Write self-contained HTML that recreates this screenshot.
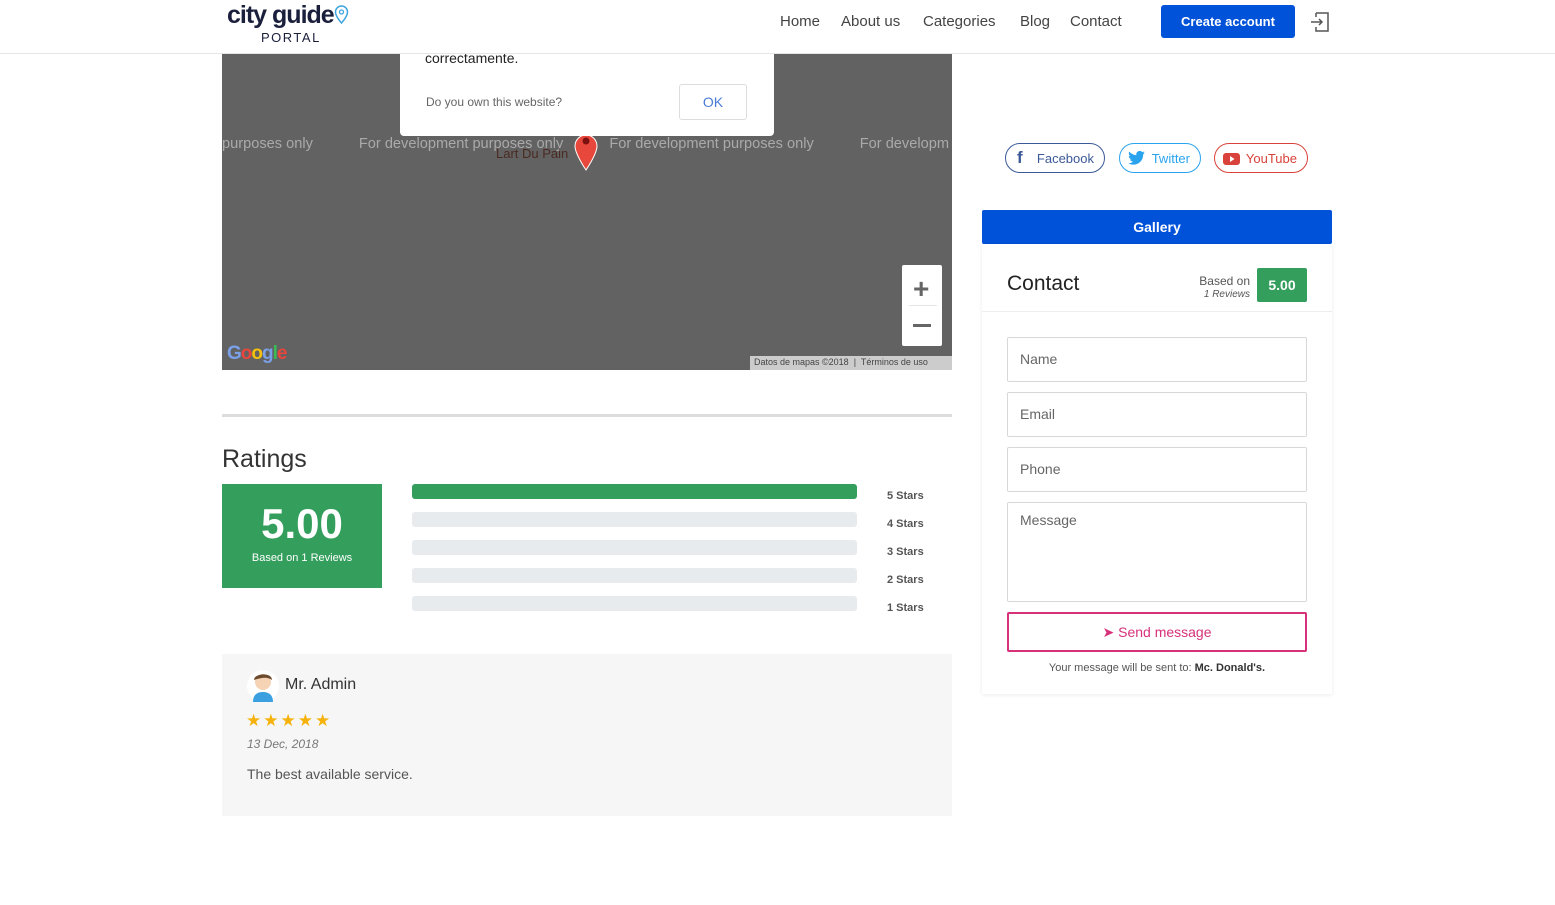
<!DOCTYPE html>
<html><head><meta charset="utf-8"><style>
*{box-sizing:border-box;margin:0;padding:0}
body{width:1555px;height:905px;background:#fff;font-family:"Liberation Sans",sans-serif;color:#333;position:relative;overflow:hidden}
.a{position:absolute}
.nav a{position:absolute;top:13px;font-size:15px;color:#444;text-decoration:none}
.inp{position:absolute;left:1007px;width:300px;border:1px solid #d8d8d8;border-radius:2px;font-size:14px;color:#666;padding:13px 12px}
.bar{position:absolute;left:412px;width:445px;height:15px;background:#e8ebee;border-radius:3px}
.lbl{position:absolute;left:887px;font-size:11px;color:#555;font-weight:bold}
.soc{position:absolute;top:143px;height:30px;border-radius:15px;border:1px solid;font-size:13px;padding:7px 10px 0 0;text-align:right}
</style></head><body>
<div class="a" style="left:0;top:53px;width:1555px;height:1px;background:#e5e5e5"></div>
<div class="a" style="left:227px;top:1px;font-size:25px;font-weight:bold;color:#1a1f3c;letter-spacing:-1px">city guide</div>
<svg class="a" style="left:334px;top:5px" width="15" height="20" viewBox="0 0 15 20"><path d="M7.5 1a6 6 0 0 1 6 6c0 4.5-6 11-6 11S1.5 11.5 1.5 7a6 6 0 0 1 6-6z" fill="none" stroke="#3da4de" stroke-width="1.5"/><circle cx="7.5" cy="7" r="2" fill="none" stroke="#3da4de" stroke-width="1.3"/></svg>
<div class="a" style="left:261px;top:30px;font-size:13px;letter-spacing:1.5px;color:#1a1f3c">PORTAL</div>
<div class="nav"><a style="left:780px">Home</a><a style="left:841px">About us</a><a style="left:923px">Categories</a><a style="left:1020px">Blog</a><a style="left:1070px">Contact</a></div>
<div class="a" style="left:1161px;top:5px;width:134px;height:33px;background:#0052d9;border-radius:3px;color:#fff;font-weight:bold;font-size:13px;text-align:center;line-height:33px">Create account</div>
<svg class="a" style="left:1309px;top:10px" width="24" height="24" viewBox="0 0 24 24" fill="none" stroke="#555" stroke-width="1.5"><path d="M7 3h12v18H7v-4M7 7V3M2 12h11M10 9l3 3-3 3"/></svg>

<div class="a" style="left:222px;top:54px;width:730px;height:316px;background:#626262;overflow:hidden">
<div class="a" style="left:0;top:82px;font-size:14.6px;color:#aaa;white-space:nowrap">purposes only<span style="margin-left:46px">For development purposes only</span><span style="margin-left:46px">For development purposes only</span><span style="margin-left:46px">For developm</span></div>
<div class="a" style="left:274px;top:92px;font-size:13px;color:#4a2a22">Lart Du Pain</div>
<svg class="a" style="left:352px;top:80px" width="24" height="37" viewBox="0 0 24 37"><path d="M12 1a11 11 0 0 1 11 11c0 8-11 24-11 24S1 20 1 12A11 11 0 0 1 12 1z" fill="#e8473b" stroke="#fff"/><circle cx="12" cy="7" r="3.5" fill="#7a1010"/></svg>
<div class="a" style="left:178px;top:0;width:374px;height:82px;background:#fff;border-radius:0 0 4px 4px"></div>
<div class="a" style="left:203px;top:-4px;font-size:14px;color:#222">correctamente.</div>
<div class="a" style="left:204px;top:41px;font-size:12px;color:#666">Do you own this website?</div>
<div class="a" style="left:457px;top:30px;width:68px;height:36px;border:1px solid #ddd;border-radius:3px;color:#4a7bd9;font-size:14px;text-align:center;line-height:34px">OK</div>
<div class="a" style="left:680px;top:211px;width:40px;height:81px;background:#fff;border-radius:2px"></div>
<div class="a" style="left:691px;top:219px;font-size:28px;color:#666;font-weight:bold">+</div>
<div class="a" style="left:687px;top:251px;width:28px;height:1px;background:#e5e5e5"></div>
<div class="a" style="left:691px;top:270px;width:18px;height:3px;background:#666"></div>
<div class="a" style="left:5px;top:289px;font-size:19px;font-weight:bold;color:#7aa0e8;letter-spacing:-1px">G<span style="color:#e8453c">o</span><span style="color:#f4c20d">o</span>g<span style="color:#3cba54">l</span><span style="color:#e8453c">e</span></div>
<div class="a" style="left:528px;top:302px;width:202px;height:14px;background:#ccc;font-size:9px;color:#444;padding:1px 4px;white-space:nowrap">Datos de mapas ©2018 &nbsp;|&nbsp; Términos de uso</div>
</div>

<div class="a" style="left:222px;top:414px;width:730px;height:3px;background:#ddd"></div>
<div class="a" style="left:222px;top:445px;font-size:25px;color:#333">Ratings</div>
<div class="a" style="left:222px;top:484px;width:160px;height:104px;background:#349e5c;color:#fff;text-align:center">
<div style="font-size:42px;font-weight:bold;margin-top:16px;line-height:48px">5.00</div>
<div style="font-size:11px;margin-top:4px">Based on 1 Reviews</div></div>
<div class="bar" style="top:484px;background:#349e5c"></div>
<div class="bar" style="top:512px"></div><div class="bar" style="top:540px"></div><div class="bar" style="top:568px"></div><div class="bar" style="top:596px"></div>
<div class="lbl" style="top:490px">5 Stars</div><div class="lbl" style="top:518px">4 Stars</div><div class="lbl" style="top:546px">3 Stars</div><div class="lbl" style="top:574px">2 Stars</div><div class="lbl" style="top:602px">1 Stars</div>

<div class="a" style="left:222px;top:654px;width:730px;height:162px;background:#f6f6f6"></div>
<svg class="a" style="left:247px;top:668px" width="32" height="36" viewBox="0 0 32 36"><circle cx="16" cy="18" r="16" fill="#fff"/><circle cx="16" cy="14" r="8" fill="#f6d3b5"/><path d="M7 12c0-7 18-8 18 0-4-3-9-3-18 0z" fill="#6b4a2e"/><path d="M6 34c0-7 4-10 10-10s10 3 10 10z" fill="#3aa0e0"/></svg>
<div class="a" style="left:285px;top:676px;font-size:16px;color:#333">Mr. Admin</div>
<div class="a" style="left:246px;top:711px;font-size:17px;color:#f5b20b;letter-spacing:2px">★★★★★</div>
<div class="a" style="left:247px;top:737px;font-size:12px;color:#777;font-style:italic">13 Dec, 2018</div>
<div class="a" style="left:247px;top:766px;font-size:14px;color:#555">The best available service.</div>

<div class="soc" style="left:1005px;width:100px;border-color:#3b5998;color:#3b5998"><span style="position:absolute;left:11px;top:4px;font-weight:bold;font-size:17px">f</span>Facebook</div>
<div class="soc" style="left:1119px;width:82px;border-color:#2aa3ef;color:#2aa3ef"><svg style="position:absolute;left:8px;top:7px" width="17" height="14" viewBox="0 0 24 20"><path d="M24 2.4a10 10 0 0 1-2.8.8A5 5 0 0 0 23.3.4a10 10 0 0 1-3.1 1.2A4.9 4.9 0 0 0 11.8 6 14 14 0 0 1 1.7.9a4.9 4.9 0 0 0 1.5 6.6A4.9 4.9 0 0 1 1 6.9a4.9 4.9 0 0 0 3.900 4.8 5 5 0 0 1-2.2.1 4.9 4.9 0 0 0 4.6 3.4A9.9 9.9 0 0 1 0 17.3 14 14 0 0 0 7.5 19.5c9 0 14-7.5 14-14v-.6A10 10 0 0 0 24 2.4z" fill="#2aa3ef"/></svg>Twitter</div>
<div class="soc" style="left:1214px;width:94px;border-color:#d9423a;color:#d9423a"><svg style="position:absolute;left:8px;top:9px" width="17" height="12"><rect width="17" height="12" rx="3" fill="#d9423a"/><path d="M7 3l4.5 3L7 9z" fill="#fff"/></svg>YouTube</div>

<div class="a" style="left:982px;top:210px;width:350px;height:34px;background:#0052d9;border-radius:2px;color:#fff;font-weight:bold;font-size:14px;text-align:center;line-height:34px">Gallery</div>
<div class="a" style="left:982px;top:244px;width:350px;height:450px;background:#fff;box-shadow:0 1px 4px rgba(0,0,0,.08)"></div>
<div class="a" style="left:1007px;top:272px;font-size:21px;color:#222">Contact</div>
<div class="a" style="left:1180px;top:275px;font-size:12px;color:#555;text-align:right;width:70px;line-height:12px">Based on<br><i style="font-size:10px">1 Reviews</i></div>
<div class="a" style="left:1257px;top:268px;width:50px;height:34px;background:#349e5c;color:#fff;font-weight:bold;font-size:14px;text-align:center;line-height:34px;border-radius:2px">5.00</div>
<div class="a" style="left:982px;top:311px;width:350px;height:1px;background:#eee"></div>
<div class="inp" style="top:337px;height:45px">Name</div>
<div class="inp" style="top:392px;height:45px">Email</div>
<div class="inp" style="top:447px;height:45px">Phone</div>
<div class="inp" style="top:502px;height:100px;padding-top:9px">Message</div>
<div class="a" style="left:1007px;top:612px;width:300px;height:40px;border:2px solid #d6317a;border-radius:2px;color:#d6317a;font-size:14px;text-align:center;line-height:36px">➤ Send message</div>
<div class="a" style="left:982px;top:662px;width:350px;text-align:center;font-size:11px;color:#555">Your message will be sent to: <b style="color:#333">Mc. Donald's.</b></div>
</body></html>
